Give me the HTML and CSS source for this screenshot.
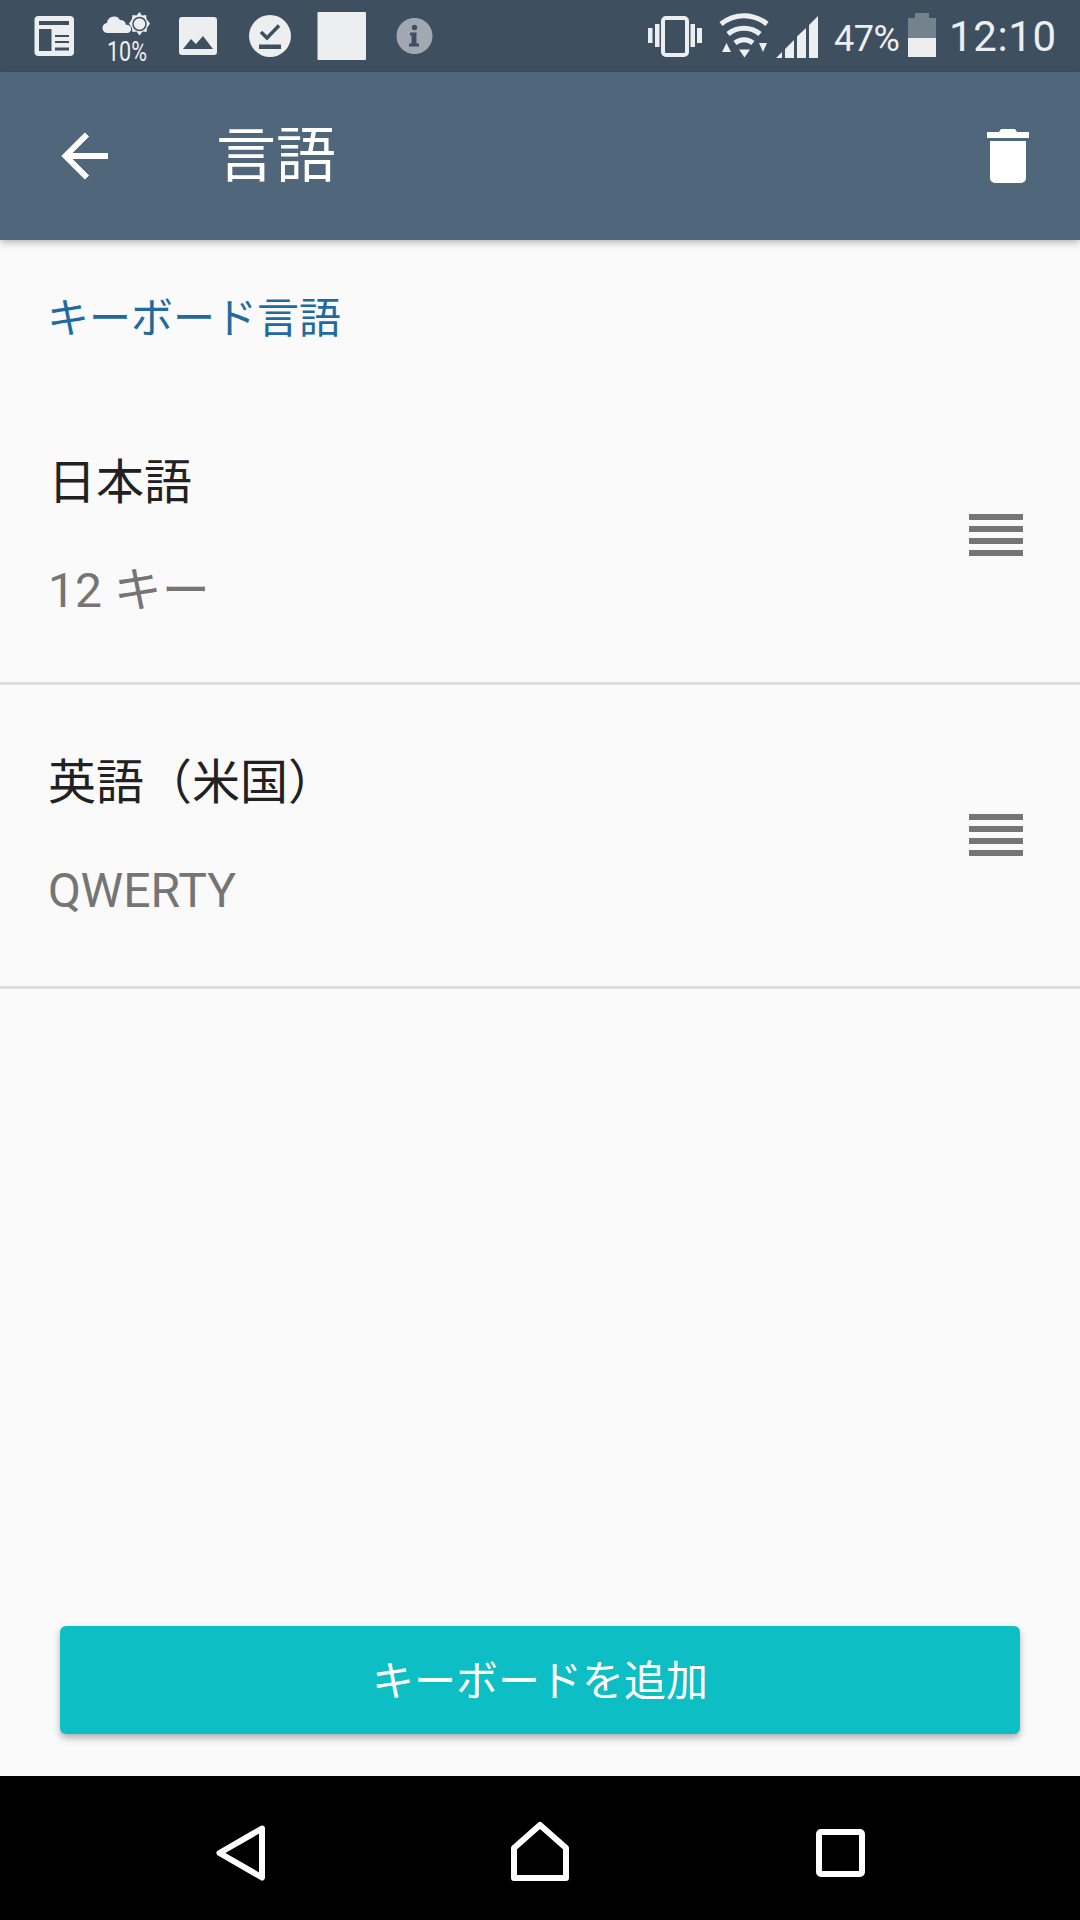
FILE: index.html
```html
<!DOCTYPE html>
<html lang="ja">
<head>
  <meta charset="UTF-8">
  <meta name="viewport" content="width=device-width, initial-scale=1.0">
  <title>言語</title>
  <link rel="stylesheet" href="styles.css">
</head>
<body>
  <!-- Status bar: svg viewBoxes use screen coordinates -->
  <div class="status-bar">
    <div class="status-left">
      <svg class="status-cell" viewBox="18 0 72 72">
        <rect x="34.500" y="16" width="39.500" height="40" rx="4" fill="#eceef0"/>
        <path d="M39 21h30v4H39zM39 29h12.500v22H39zM55 35h14v2H55zM55 41h14v2H55zM55 47.500h14v3H55z" fill="#3e5060"/>
      </svg>
      <svg class="status-cell" viewBox="90 0 72 72">
        <path d="M108 33a5 5 0 0 1-1-10 7 7 0 0 1 13-3 6 6 0 0 1 6 5 4 4 0 0 1 2 8z" fill="#eceef0"/>
        <path d="M139.500 12l2.500 3.500 4-.5.500 4 3.500 4.500-3 4.500-.5 4-4-.5-3 4-3-4-4 .5-.5-4-3-4.500 3-4.500.5-4 4 .5z" fill="#eceef0"/>
        <circle cx="139.500" cy="24" r="6.500" fill="#eceef0" stroke="#3e5060" stroke-width="1.500"/>
        <text class="weather-text" x="107" y="61" textLength="40" lengthAdjust="spacingAndGlyphs">10%</text>
      </svg>
      <svg class="status-cell" viewBox="162 0 72 72">
        <rect x="179" y="17" width="38" height="38" rx="3" fill="#eceef0"/>
        <path d="M183 49l8-10 5 5 7-8 10 13z" fill="#3e5060"/>
      </svg>
      <svg class="status-cell" viewBox="234 0 72 72">
        <circle cx="270" cy="36" r="21" fill="#eceef0"/>
        <path d="M261 32l6 6 12-12.500" fill="none" stroke="#3e5060" stroke-width="3.500"/>
        <path d="M259 44.500h22v4.500h-22z" fill="#3e5060"/>
      </svg>
      <svg class="status-cell" viewBox="306 0 72 72">
        <rect x="317.500" y="12" width="48.500" height="48" rx="1" fill="#eceef0"/>
      </svg>
      <svg class="status-cell" viewBox="378 0 72 72">
        <circle cx="414.500" cy="36" r="18" fill="#a0a9b1"/>
        <circle cx="414.500" cy="27.500" r="2.700" fill="#3e5060"/>
        <path d="M410 32.500h6.500v11h2.500v3h-10v-3h2.500v-8H410z" fill="#3e5060"/>
      </svg>
    </div>
    <div class="status-right">
      <svg class="status-icons" viewBox="640 0 300 72">
        <rect x="663" y="18" width="24" height="37" rx="3" fill="none" stroke="#eceef0" stroke-width="4"/>
        <path d="M648 28h4.500v15H648zM655 24h4.500v23H655zM690.500 24h4.500v23h-4.500zM697 28h5v15h-5z" fill="#eceef0"/>
        <path d="M721 24a36 36 0 0 1 46 0M728 34a25 25 0 0 1 32 0M735 43a14 14 0 0 1 18 0" fill="none" stroke="#eceef0" stroke-width="5"/>
        <path d="M739 49.500h11l-5.500 8zM726.500 43l4.500 9h-9zM759 43h8l-4 9z" fill="#eceef0"/>
        <path d="M776 58l6-6v6zM785 49l9-9v18h-9zM797 36.500l9-8.500v30h-9zM809 25l9-9v42h-9z" fill="#eceef0"/>
        <text class="battery-text" x="834" y="51">47%</text>
        <path d="M915 13h14v5h7v20h-28V18h7z" fill="#74828d"/>
        <path d="M908 38h28v19h-28z" fill="#eceef0"/>
      </svg>
      <span class="clock">12:10</span>
    </div>
  </div>

  <header class="app-bar">
    <svg class="back-icon" viewBox="56 130 52 52">
      <path d="M108 156H65M87 134.500L65.500 156 87 177.500" fill="none" stroke="#fff" stroke-width="6"/>
    </svg>
    <h1 class="app-title">言語</h1>
    <svg class="trash-icon" viewBox="984 126 48 60">
      <path d="M987 132h12l2-3h14l2 3h12v6h-42z" fill="#fff"/>
      <path d="M990 141h36v37a5 5 0 0 1-5 5h-26a5 5 0 0 1-5-5z" fill="#fff"/>
    </svg>
  </header>

  <main class="content">
    <h2 class="section-title">キーボード言語</h2>
    <div class="lang-list">
      <div class="lang-row">
        <div class="lang-text">
          <div class="lang-name">日本語</div>
          <div class="lang-layout">12 キー</div>
        </div>
        <div class="drag-handle"><span></span><span></span><span></span><span></span></div>
      </div>
      <div class="lang-row">
        <div class="lang-text">
          <div class="lang-name">英語（米国）</div>
          <div class="lang-layout">QWERTY</div>
        </div>
        <div class="drag-handle"><span></span><span></span><span></span><span></span></div>
      </div>
    </div>
    <button class="add-btn" type="button">キーボードを追加</button>
  </main>

  <nav class="nav-bar">
    <svg class="nav-back" viewBox="210 1810 62 76">
      <path d="M262 1828.500L219.500 1853 262 1877.500z" fill="none" stroke="#fff" stroke-width="6" stroke-linejoin="round"/>
    </svg>
    <svg class="nav-home" viewBox="505 1810 70 76">
      <path d="M514 1878h52v-30l-26-23-26 23z" fill="none" stroke="#fff" stroke-width="6" stroke-linejoin="round"/>
    </svg>
    <svg class="nav-recent" viewBox="810 1810 62 76">
      <rect x="819" y="1832" width="43" height="42" rx="2" fill="none" stroke="#fff" stroke-width="6"/>
    </svg>
  </nav>
</body>
</html>
```

FILE: styles.css
```css
body {
  font-family: Roboto, "Noto Sans CJK JP", sans-serif;
  display: flex;
  flex-direction: column;
  height: 1920px;
  margin: 0;
  background-color: #fafafa;
  overflow: hidden;
}
h1, h2 {
  margin: 0;
  font-weight: 400;
}
.status-bar {
  display: flex;
  align-items: center;
  justify-content: space-between;
  height: 72px;
  padding-left: 18px;
  background-color: #3e5060;
  color: #eceef0;
}
.status-left {
  display: flex;
}
.status-cell {
  width: 72px;
  height: 72px;
}
.weather-text {
  font-size: 27px;
  fill: #eceef0;
}
.status-right {
  display: flex;
  align-items: center;
}
.status-icons {
  width: 300px;
  height: 72px;
}
.battery-text {
  font-size: 36px;
  fill: #eceef0;
  letter-spacing: -0.5px;
}
.clock {
  width: 140px;
  padding-left: 9px;
  box-sizing: border-box;
  font-size: 42px;
  letter-spacing: 0.6px;
}
.app-bar {
  display: flex;
  align-items: center;
  height: 168px;
  padding: 0 48px 0 56px;
  background-color: #50667b;
  box-shadow: 0 2px 8px rgba(0, 0, 0, 0.3);
  position: relative;
}
.back-icon {
  width: 52px;
  height: 52px;
}
.app-title {
  margin-left: 108px;
  margin-top: 2px;
  font-size: 60px;
  line-height: 66px;
  color: #fff;
}
.trash-icon {
  width: 48px;
  height: 60px;
  margin-left: auto;
}
.content {
  flex: 1;
  display: flex;
  flex-direction: column;
}
.section-title {
  height: 90px;
  padding: 55px 47px 0;
  font-size: 42px;
  line-height: 48px;
  color: #1f6b9f;
}
.lang-row {
  display: flex;
  align-items: center;
  justify-content: space-between;
  padding: 68px 57px 61px 48px;
  border-bottom: 3px solid #dedede;
}
.lang-row:last-child {
  padding-bottom: 65px;
}
.lang-name {
  font-size: 48px;
  line-height: 60px;
  color: #212121;
}
.lang-layout {
  margin-top: 48px;
  font-size: 48px;
  line-height: 60px;
  color: #757575;
}
.drag-handle {
  display: flex;
  flex-direction: column;
  gap: 6px;
  width: 54px;
  margin-bottom: 5px;
}
.drag-handle span {
  height: 6px;
  background-color: #757575;
}
.add-btn {
  height: 108px;
  margin: auto 60px 42px;
  padding: 0 0 6px;
  border: none;
  border-radius: 6px;
  background-color: #0dbec5;
  box-shadow: 0 4px 7px rgba(0, 0, 0, 0.3);
  color: #fff;
  font-family: inherit;
  font-size: 42px;
}
.nav-bar {
  position: relative;
  height: 144px;
  background-color: #000;
  display: flex;
  align-items: center;
}
.nav-back {
  width: 62px;
  height: 76px;
  margin-left: 210px;
}
.nav-home {
  width: 70px;
  height: 76px;
  margin-left: 233px;
}
.nav-recent {
  width: 62px;
  height: 76px;
  margin-left: 235px;
}
```
